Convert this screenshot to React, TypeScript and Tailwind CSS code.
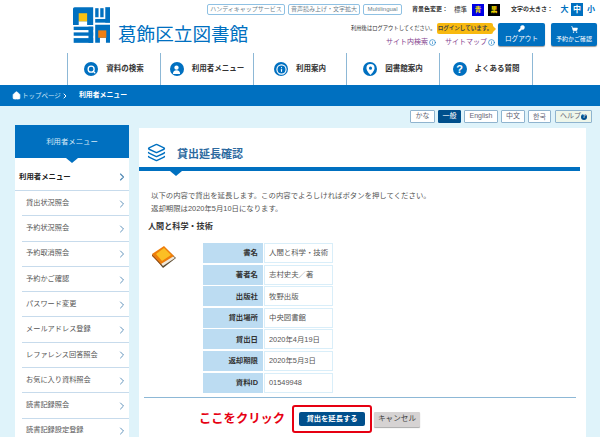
import React from 'react';
import { ChevronRight, Home, Info, KeyRound, Layers, Search, ShoppingCart } from 'lucide-react';

const font = "font-['Liberation_Sans','Noto_Sans_CJK_JP',sans-serif]";

const Logo = () => (
  <svg width="37" height="36" viewBox="0 0 110 106" className="shrink-0">
    <g fill="#0070c0">
      <path d="M0 5 Q0 0 5 0 H60 V53 H42 V42 H17 V53 H0 Z" />
      <rect x="66" y="3" width="10" height="27" />
      <rect x="81" y="3" width="10" height="27" />
      <rect x="96" y="0" width="14" height="46" />
      <rect x="66" y="35" width="44" height="11" />
      <rect x="2" y="58" width="58" height="10" />
      <rect x="2" y="75" width="58" height="10" />
      <rect x="2" y="92" width="58" height="14" />
      <rect x="46" y="58" width="14" height="48" />
      <path d="M66 52 H110 V106 H98 V91 H80 V106 H66 Z" />
    </g>
    <rect x="17" y="18" width="25" height="24" fill="#f9c212" />
    <rect x="75" y="69" width="24" height="22" fill="#f07f13" />
  </svg>
);

const Book = () => (
  <svg width="24" height="22" viewBox="0 0 24 22" className="shrink-0">
    <path d="M1 10 L13 2 L24 12 L11 22 Z" fill="#5b4a30" />
    <path d="M2 10 L13 3 L23 12 L11 20 Z" fill="#efe9dc" />
    <path d="M0 8 L12 0 L22 10 L9 18 Z" fill="#ee7d0a" />
    <path d="M4 8 L12 2 L19 9 L10 15 Z" fill="#fbbf24" />
    <path d="M0 8 L9 18 L10 20 L0 10 Z" fill="#a4500a" />
  </svg>
);

const UserIcon = () => (
  <svg width="9" height="9" viewBox="0 0 10 10" fill="white">
    <circle cx="5" cy="3" r="2.4" />
    <path d="M1 10 Q1 5.8 5 5.8 Q9 5.8 9 10 Z" />
  </svg>
);

const PinIcon = () => (
  <svg width="9" height="11" viewBox="0 0 10 12">
    <path fillRule="evenodd" fill="white" d="M5 0 A4.5 4.5 0 0 1 9.5 4.5 C9.5 7.5 5 12 5 12 C5 12 0.5 7.5 0.5 4.5 A4.5 4.5 0 0 1 5 0 Z M5 2.8 A1.7 1.7 0 1 0 5 6.2 A1.7 1.7 0 1 0 5 2.8 Z" />
  </svg>
);

const TopTag = ({ children, className = '' }: { children: React.ReactNode; className?: string }) => (
  <span className={`flex h-[11px] items-center justify-center rounded-[2px] border border-[#8fc1e3] text-[6px] text-[#6d7f8d] ${className}`}>
    {children}
  </span>
);

const NavItem = ({ icon, label }: { icon: React.ReactNode; label: string }) => (
  <div className="flex h-full w-[93px] items-center justify-center gap-[8px] border-l border-[#8db8d6]">
    <span className="flex h-[14px] w-[14px] items-center justify-center rounded-full bg-[#0070c0] text-white">{icon}</span>
    <span className="text-[7.5px] font-bold text-[#333]">{label}</span>
  </div>
);

const LangTab = ({ label, className = '' }: { label: React.ReactNode; className?: string }) => (
  <span className={`flex h-[13px] items-center justify-center rounded-[1px] border text-[7px] ${className}`}>
    {label}
  </span>
);

const menu = [
  '貸出状況照会',
  '予約状況照会',
  '予約取消照会',
  '予約かご確認',
  'パスワード変更',
  'メールアドレス登録',
  'レファレンス回答照会',
  'お気に入り資料照会',
  '読書記録照会',
  '読書記録設定登録',
];

const rows = [
  ['書名', '人間と科学・技術'],
  ['著者名', '志村史夫／著'],
  ['出版社', '牧野出版'],
  ['貸出場所', '中央図書館'],
  ['貸出日', '2020年4月19日'],
  ['返却期限', '2020年5月3日'],
  ['資料ID', '01549948'],
];

const tabPlain = 'border-[#8fb4cf] bg-white text-[#667]';

export default function App() {
  return (
    <div className={`h-[440px] w-[600px] overflow-hidden bg-white ${font}`}>
      <header className="h-[85px] bg-white">
        <div className="flex h-[53px]">
          <div className="flex w-[205px] shrink-0 pl-[73px] pt-[7px]">
            <Logo />
            <span className="mt-[17px] ml-[8px] whitespace-nowrap text-[18.6px] leading-[22px] text-[#0070c0]">葛飾区立図書館</span>
          </div>
          <div className="flex-1 pt-[3px]">
            <div className="flex h-[13px] items-center">
              <TopTag className="ml-[2px] w-[78px]">ハンディキャップサービス</TopTag>
              <TopTag className="ml-[3px] w-[72px]">音声読み上げ・文字拡大</TopTag>
              <TopTag className="ml-[3px] w-[39px]">Multilingual</TopTag>
              <span className="ml-[10px] w-[40px] whitespace-nowrap text-[6px] font-bold text-[#333]">背景色変更：</span>
              <span className="ml-[2px] w-[16px] text-[6.5px] text-[#333]">標準</span>
              <span className="ml-[2px] flex h-[12px] w-[12px] items-center justify-center bg-[#0000e6] text-[6.5px] font-bold text-[#ffe000]">青</span>
              <span className="ml-[4px] flex h-[12px] w-[12px] items-center justify-center bg-black text-[6.5px] font-bold text-[#ffe000]">黒</span>
              <span className="ml-[11px] w-[47px] whitespace-nowrap text-[6px] font-bold text-[#333]">文字の大きさ：</span>
              <span className="w-[13px] text-center text-[8px] font-bold text-[#0070c0]">大</span>
              <span className="flex h-[13px] w-[12px] items-center justify-center bg-[#0070c0] text-[8px] font-bold text-white">中</span>
              <span className="w-[16px] text-center text-[8px] font-bold text-[#0070c0]">小</span>
            </div>
            <div className="mt-[7px] flex items-start">
              <div className="ml-[146px] w-[147px]">
                <div className="flex h-[11px] items-center">
                  <span className="w-[86px] whitespace-nowrap text-[5.3px] text-[#333]">利用後はログアウトしてください。</span>
                  <span className="relative flex h-[11px] w-[56px] items-center justify-center whitespace-nowrap rounded-[2px] bg-[#f8b90f] text-[5.5px] font-bold text-[#444]">
                    ログインしています。
                    <span className="absolute left-full h-0 w-0 border-y-[3px] border-l-[3px] border-y-transparent border-l-[#f8b90f]" />
                  </span>
                </div>
                <div className="mt-[3px] flex items-center text-[7px] text-[#86438f]">
                  <span className="ml-[35px] flex w-[59px] items-center gap-[1px] whitespace-nowrap">
                    サイト内検索
                    <Info size={7} className="text-[#0070c0]" />
                  </span>
                  <span className="flex items-center gap-[1px] whitespace-nowrap">
                    サイトマップ
                    <Info size={7} className="text-[#0070c0]" />
                  </span>
                </div>
              </div>
              <div className="flex h-[23px] w-[47px] flex-col items-center justify-center rounded-[2px] bg-[#0070c0] text-[6.6px] text-white shadow-[0_1px_1px_#999]">
                <KeyRound size={7} fill="white" />
                <span className="mt-[2px] whitespace-nowrap">ログアウト</span>
              </div>
              <div className="ml-[6px] flex h-[23px] w-[46px] flex-col items-center justify-center rounded-[2px] bg-[#0070c0] text-[6px] text-white shadow-[0_1px_1px_#999]">
                <ShoppingCart size={7} fill="white" />
                <span className="mt-[2px] whitespace-nowrap">予約かご確認</span>
              </div>
            </div>
          </div>
        </div>
        <nav className="ml-[67px] flex h-[32px] w-[466px] border-r border-[#8db8d6]">
          <NavItem icon={<Search size={9} strokeWidth={3.5} />} label="資料の検索" />
          <NavItem icon={<UserIcon />} label="利用者メニュー" />
          <NavItem icon={<Info size={11} strokeWidth={2.5} />} label="利用案内" />
          <NavItem icon={<PinIcon />} label="図書館案内" />
          <NavItem icon={<span className="text-[11px] font-bold">?</span>} label="よくある質問" />
        </nav>
      </header>

      <div className="flex h-[21px] items-center bg-[#0070c0] pl-[12px] text-[6.5px] text-[#cfe6f6]">
        <Home size={9} fill="white" className="text-white" />
        <span className="ml-[1px]">トップページ</span>
        <ChevronRight size={8} strokeWidth={3} className="text-white" />
        <span className="ml-[10px] text-[6.9px] font-bold text-white">利用者メニュー</span>
      </div>

      <div className="h-[331px] bg-[#dff3fa]">
        <div className="flex h-[22px] items-start justify-end gap-[3px] pt-[4px] pr-[8px]">
          <LangTab label="かな" className={`w-[25px] ${tabPlain}`} />
          <LangTab label="一般" className="w-[23px] border-[#004f8c] bg-[#004f8c] text-white" />
          <LangTab label="English" className={`w-[34px] ${tabPlain}`} />
          <LangTab label="中文" className={`w-[24px] ${tabPlain}`} />
          <LangTab label="한국" className={`w-[23px] font-['Noto_Sans_CJK_KR',sans-serif] ${tabPlain}`} />
          <LangTab
            label={
              <span className="flex items-center">
                ヘルプ
                <span className="flex h-[6px] w-[6px] items-center justify-center rounded-full bg-[#004f8c] text-[5px] font-bold text-white">?</span>
              </span>
            }
            className="ml-[1px] w-[37px] border-[#8fb4cf] bg-[#eef6ea] text-[#667]"
          />
        </div>

        <div className="flex items-start pl-[15px]">
          <aside className="-mt-[3px] h-[312px] w-[114px] shrink-0 bg-white">
            <div className="relative flex h-[33px] items-center justify-center bg-[#0070c0] text-[7.4px] text-[#d5e9f7]">
              利用者メニュー
              <span className="absolute top-full left-[51px] h-0 w-0 border-x-[6px] border-t-[5px] border-x-transparent border-t-[#0070c0]" />
            </div>
            <div className="flex h-[33px] items-center justify-between border-b border-[#c7dbec] pt-[6px] pr-[1px] pl-[4px] text-[7.4px] font-bold text-[#222]">
              利用者メニュー
              <ChevronRight size={12} strokeWidth={2.2} className="text-[#4f87b3]" />
            </div>
            <ul className="ml-[7px]">
              {menu.map((item) => (
                <li key={item} className="flex h-[25.3px] items-center justify-between border-b border-[#c7dbec] pr-[1px] pl-[4px] text-[7.2px] text-[#555]">
                  {item}
                  <ChevronRight size={12} strokeWidth={1.8} className="mt-[1px] text-[#4f87b3]" />
                </li>
              ))}
            </ul>
          </aside>

          <main className="ml-[10px] h-[309px] w-[447px] bg-white">
            <div className="flex h-[39px] items-end pb-[5px] pl-[8px]">
              <Layers size={19} strokeWidth={1.8} className="text-[#0070c0]" />
              <h1 className="ml-[11px] text-[11px] leading-[15px] font-bold text-[#2d6a9f]">貸出延長確認</h1>
            </div>
            <div className="relative mr-[6px] h-[4px] bg-[#0070c0]">
              <span className="absolute top-full left-[31px] h-0 w-0 border-x-[6px] border-t-[5px] border-x-transparent border-t-[#0070c0]" />
            </div>
            <div className="pt-[19px] pl-[12px] text-[7.4px] leading-[12.5px] text-[#555]">
              <p>以下の内容で貸出を延長します。この内容でよろしければボタンを押してください。</p>
              <p>返却期限は2020年5月10日になります。</p>
            </div>
            <h2 className="mt-[6px] ml-[9px] text-[8.1px] leading-[12px] font-bold text-[#333]">人間と科学・技術</h2>
            <div className="mt-[10px] flex items-start">
              <div className="mt-[3px] ml-[13px] w-[51px]">
                <Book />
              </div>
              <div className="w-[130px]">
                {rows.map(([label, value]) => (
                  <div key={label} className="mb-[1.6px] flex h-[20px] gap-px">
                    <div className="flex w-[60px] items-center justify-end bg-[#bcdcf2] pr-[5px] text-[7.4px] font-bold text-[#333]">{label}</div>
                    <div className="flex flex-1 items-center border border-[#d9eef9] pl-[4px] text-[7.4px] text-[#555]">{value}</div>
                  </div>
                ))}
              </div>
            </div>
            <div className="mt-[3px] mr-[10px] ml-[5px] h-px bg-[#8db8d6]" />
            <div className="mt-[7px] flex items-center">
              <span className="ml-[60px] w-[93px] whitespace-nowrap text-[12.3px] font-bold text-[#e60012]">ここをクリック</span>
              <div className="flex h-[28px] w-[80px] items-center justify-center rounded-[3px] border-2 border-[#e60012]">
                <button className="h-[14px] w-[66px] rounded-[2px] bg-[#004f8c] text-[7.3px] font-bold text-white">貸出を延長する</button>
              </div>
              <button className="ml-[2px] h-[15px] w-[46px] rounded-[1px] bg-[#d6d3d3] text-[7.6px] text-[#444] shadow-[0_1px_1px_#aaa]">キャンセル</button>
            </div>
          </main>
        </div>
      </div>
    </div>
  );
}
